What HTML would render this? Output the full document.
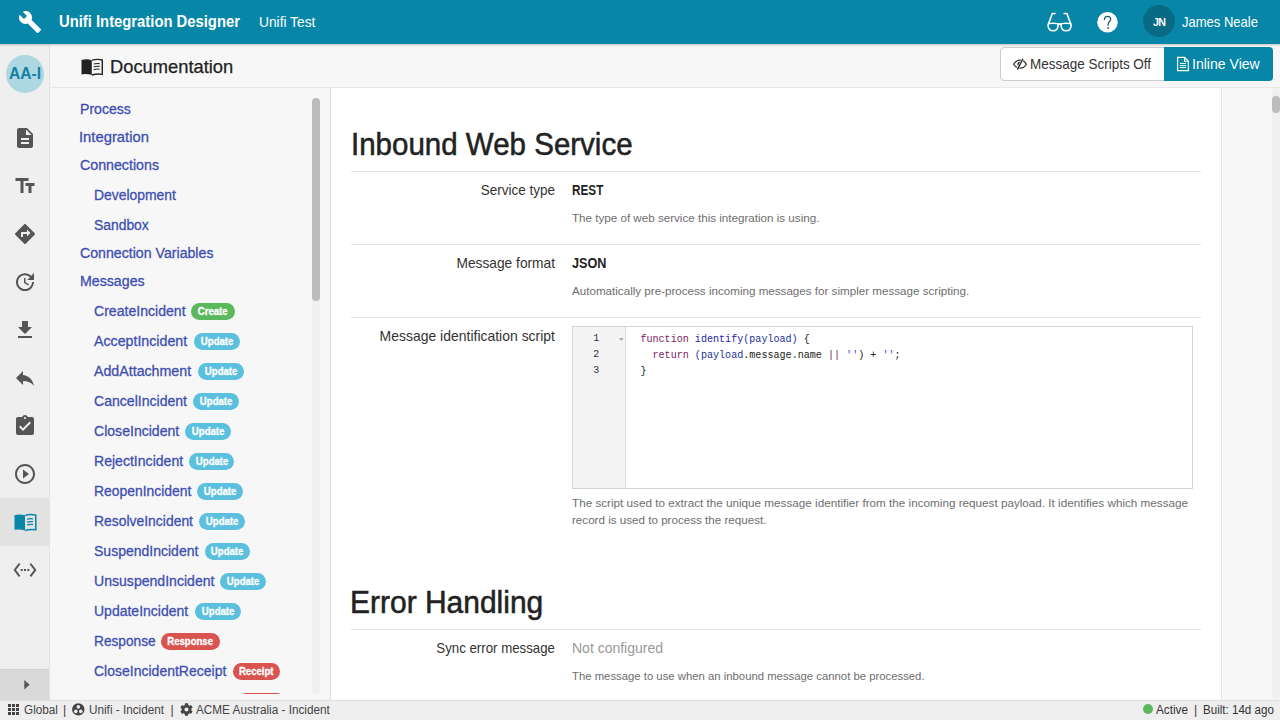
<!DOCTYPE html>
<html><head><meta charset="utf-8">
<style>
*{box-sizing:border-box;margin:0;padding:0}
html,body{width:1280px;height:720px;overflow:hidden;background:#f7f7f7;font-family:"Liberation Sans",sans-serif;position:relative}
.a{position:absolute;white-space:nowrap}
.r{position:absolute}
svg{position:absolute;overflow:visible}
</style></head><body>
<div class="r" style="left:0;top:0;width:1280px;height:44px;background:#0786a7;box-shadow:0 1px 2px rgba(0,0,0,.22);z-index:3"></div>
<div class="r" style="left:0;top:44px;width:49px;height:656px;background:#efefef"></div>
<div class="r" style="left:49px;top:44px;width:1px;height:656px;background:#e3e3e3"></div>
<div class="r" style="left:50px;top:87px;width:1230px;height:1px;background:#e8e8e8"></div>
<div class="r" style="left:330px;top:88px;width:1px;height:612px;background:#dedede"></div>
<div class="r" style="left:331px;top:88px;width:890px;height:612px;background:#fff"></div>
<div class="r" style="left:1221px;top:88px;width:1px;height:612px;background:#e6e6e6"></div>
<div class="r" style="left:312px;top:98px;width:8px;height:596px;background:#f0f0f0;border-radius:4px"></div>
<div class="r" style="left:312px;top:98px;width:8px;height:203px;background:#bcbcbc;border-radius:4px"></div>
<div class="r" style="left:1272px;top:88px;width:8px;height:611px;background:#f0f0f0;border-radius:4px"></div>
<div class="r" style="left:1272px;top:96px;width:8px;height:17px;background:#bcbcbc;border-radius:4px"></div>
<div class="r" style="left:0;top:498px;width:49px;height:48px;background:#e2e2e2"></div>
<div class="r" style="left:0;top:669px;width:49px;height:31px;background:#d9d9d9;border-top:1px solid #cfcfcf"></div>
<div class="r" style="left:0;top:700px;width:1280px;height:20px;background:#eeeeee;border-top:1px solid #e0e0e0"></div>
<div class="r" style="left:0;top:0;width:1280px;height:44px;z-index:4">
<svg style="left:18px;top:10px" width="24" height="24" viewBox="0 0 24 24"><path fill="#fff" d="M22.7 19l-9.1-9.1c.9-2.3.4-5-1.5-6.9-2-2-5-2.4-7.4-1.3L9 6 6 9 1.6 4.7C.4 7.1.9 10.1 2.9 12.1c1.9 1.9 4.6 2.4 6.9 1.5l9.1 9.1c.4.4 1 .4 1.4 0l2.3-2.3c.5-.4.5-1.1.1-1.4z"/></svg>
<div class="a" style="left:59.0px;transform-origin:0 0;top:10.57px;font-size:17.1px;line-height:21px;font-weight:700;color:#fff;transform:scaleX(0.8660);">Unifi Integration Designer</div>
<div class="a" style="left:258.5px;transform-origin:0 0;top:12.87px;font-size:14.8px;line-height:18px;font-weight:400;color:#fff;transform:scaleX(0.9300);">Unifi Test</div>
<svg style="left:1042px;top:8px" width="36" height="28" viewBox="0 0 36 28"><g fill="none" stroke="#fff" stroke-width="1.6" stroke-linecap="round" stroke-linejoin="round"><path d="M6.1 16.3 C6.3 15 15.9 14.9 16.1 16.3 C16.5 20.6 14.3 22.8 11.1 22.8 C7.9 22.8 5.7 20.6 6.1 16.3Z"/><path d="M19.1 16.3 C19.3 14.9 28.9 15 29.1 16.3 C29.5 20.6 27.3 22.8 24.1 22.8 C20.9 22.8 18.7 20.6 19.1 16.3Z"/><path d="M16.1 16.6 Q17.6 15.2 19.1 16.6"/><path d="M6.6 15.6 L10.3 5.5 H13.1"/><path d="M28.6 15.6 L24.9 5.5 H22.1"/></g></svg>
<svg style="left:1097px;top:11.8px" width="21" height="21" viewBox="0 0 21 21"><circle cx="10.5" cy="10.25" r="10.25" fill="#fff"/><path d="M7.4 7.6 C7.4 5.4 8.9 4.3 10.6 4.3 C12.4 4.3 13.7 5.5 13.7 7.2 C13.7 9.4 11.1 9.7 11.1 12.4 V13.3" fill="none" stroke="#1e5a6c" stroke-width="1.25" stroke-linecap="round"/><circle cx="11.1" cy="16" r="0.9" fill="#1e5a6c"/></svg>
<div class="r" style="left:1143px;top:5px;width:32px;height:32px;border-radius:16px;background:#086a84"></div>
<div class="a" style="left:1152.8px;transform-origin:0 0;top:14.78px;font-size:11.6px;line-height:14px;font-weight:700;color:#fff;transform:scaleX(0.9200);letter-spacing:-0.8px;">JN</div>
<div class="a" style="left:1182px;transform-origin:0 0;top:12.87px;font-size:14.8px;line-height:18px;font-weight:400;color:#fff;transform:scaleX(0.8800);">James Neale</div>
</div>
<div class="r" style="left:6px;top:55px;width:38px;height:38px;border-radius:19px;background:#acd7e3"></div>
<div class="a" style="left:9.3px;transform-origin:0 0;top:62.61px;font-size:17px;line-height:21px;font-weight:700;color:#1580a2;transform:scaleX(0.9200);">AA-I</div>
<svg style="left:81px;top:58.8px" width="22" height="16" viewBox="0 0 22 16"><path d="M0.5 1 Q5.5 -0.4 10.8 1.2 V16 Q5.5 14.4 0.5 15.4Z" fill="#222"/><path d="M11 1.2 Q16.3 -0.4 21.3 1 V15.4 Q16.3 14.4 11 16" fill="none" stroke="#222" stroke-width="1.4"/><path d="M12.7 5 Q15.5 4.2 18.6 4.6 M12.7 7.8 Q15.5 7 18.6 7.4 M12.7 10.6 Q15.5 9.8 18.6 10.2" fill="none" stroke="#222" stroke-width="1.1"/></svg>
<div class="a" style="left:109.5px;transform-origin:0 0;top:54.89px;font-size:18.5px;line-height:23px;font-weight:400;color:#222;transform:scaleX(0.9900);-webkit-text-stroke:0.25px #222;">Documentation</div>
<div class="r" style="left:1000px;top:47px;width:165px;height:34px;background:#fff;border:1px solid #cccccc;border-radius:4px 0 0 4px"></div>
<svg style="left:1012px;top:58px" width="16" height="12" viewBox="0 0 16 12"><g fill="none" stroke="#333" stroke-width="1.25"><path d="M1.6 6.3 C3.4 3.2 5.6 2.2 8 2.2 C10.4 2.2 12.6 3.2 14.4 6.3 C12.6 9.3 10.4 10.2 8 10.2 C5.6 10.2 3.4 9.3 1.6 6.3Z"/></g><path d="M8 3.6 A2.7 2.7 0 0 0 6.6 8.6 L9.2 3.8Z" fill="#333"/><path d="M11 0.8 L5.4 11.6" stroke="#fff" stroke-width="2.4"/><path d="M11 0.8 L5.4 11.6" stroke="#222" stroke-width="1.3"/></svg>
<div class="a" style="left:1029.8px;transform-origin:0 0;top:55.08px;font-size:14.2px;line-height:18px;font-weight:400;color:#333;transform:scaleX(0.9500);">Message Scripts Off</div>
<div class="r" style="left:1164px;top:47px;width:109px;height:34px;background:#0786a7;border-radius:0 4px 4px 0"></div>
<svg style="left:1176px;top:56px" width="14" height="16" viewBox="0 0 14 16"><path d="M1.6 1.4 H8.6 L12.4 5.2 V14.6 H1.6Z" fill="none" stroke="#fff" stroke-width="1.25"/><path d="M8.6 1.4 V5.2 H12.4" fill="none" stroke="#fff" stroke-width="1.1"/><path d="M3.9 7.4 H10.1 M3.9 9.6 H10.1 M3.9 11.6 H10.1" stroke="#fff" stroke-width="1"/></svg>
<div class="a" style="left:1191.8px;transform-origin:0 0;top:54.98px;font-size:14.5px;line-height:18px;font-weight:400;color:#fff;transform:scaleX(0.9700);">Inline View</div>
<div class="r" style="left:50px;top:88px;width:262px;height:606px;overflow:hidden">
<div class="a" style="left:30px;transform-origin:0 0;top:11.91px;font-size:14.7px;line-height:18px;font-weight:400;color:#3e4fb0;transform:scaleX(0.9595);-webkit-text-stroke:0.3px #3e4fb0;">Process</div>
<div class="a" style="left:29.1px;transform-origin:0 0;top:39.91px;font-size:14.7px;line-height:18px;font-weight:400;color:#3e4fb0;transform:scaleX(1.0064);-webkit-text-stroke:0.3px #3e4fb0;">Integration</div>
<div class="a" style="left:30px;transform-origin:0 0;top:67.91px;font-size:14.7px;line-height:18px;font-weight:400;color:#3e4fb0;transform:scaleX(0.9673);-webkit-text-stroke:0.3px #3e4fb0;">Connections</div>
<div class="a" style="left:44.3px;transform-origin:0 0;top:97.91px;font-size:14.7px;line-height:18px;font-weight:400;color:#3e4fb0;transform:scaleX(0.9465);-webkit-text-stroke:0.3px #3e4fb0;">Development</div>
<div class="a" style="left:44.3px;transform-origin:0 0;top:127.91px;font-size:14.7px;line-height:18px;font-weight:400;color:#3e4fb0;transform:scaleX(0.9447);-webkit-text-stroke:0.3px #3e4fb0;">Sandbox</div>
<div class="a" style="left:30px;transform-origin:0 0;top:155.91px;font-size:14.7px;line-height:18px;font-weight:400;color:#3e4fb0;transform:scaleX(0.9634);-webkit-text-stroke:0.3px #3e4fb0;">Connection Variables</div>
<div class="a" style="left:30px;transform-origin:0 0;top:183.91px;font-size:14.7px;line-height:18px;font-weight:400;color:#3e4fb0;transform:scaleX(0.9651);-webkit-text-stroke:0.3px #3e4fb0;">Messages</div>
<div class="a" style="left:44.3px;transform-origin:0 0;top:213.51px;font-size:14.7px;line-height:18px;font-weight:400;color:#3e4fb0;transform:scaleX(0.9590);-webkit-text-stroke:0.3px #3e4fb0;">CreateIncident</div>
<div class="r" style="left:141.00px;top:215.00px;width:44.00px;height:17px;border-radius:8.5px;background:#5cb85c"></div>
<div class="a" style="left:141.00px;width:44.00px;top:216.80px;font-size:10.1px;line-height:13px;font-weight:700;color:#fff;text-align:center;-webkit-text-stroke:0.3px #fff"><span style="display:inline-block;transform:scaleX(0.95)">Create</span></div>
<div class="a" style="left:44.0px;transform-origin:0 0;top:243.51px;font-size:14.7px;line-height:18px;font-weight:400;color:#3e4fb0;transform:scaleX(0.9665);-webkit-text-stroke:0.3px #3e4fb0;">AcceptIncident</div>
<div class="r" style="left:143.75px;top:245.00px;width:46.25px;height:17px;border-radius:8.5px;background:#5bc0de"></div>
<div class="a" style="left:143.75px;width:46.25px;top:246.80px;font-size:10.1px;line-height:13px;font-weight:700;color:#fff;text-align:center;-webkit-text-stroke:0.3px #fff"><span style="display:inline-block;transform:scaleX(0.95)">Update</span></div>
<div class="a" style="left:44.3px;transform-origin:0 0;top:273.51px;font-size:14.7px;line-height:18px;font-weight:400;color:#3e4fb0;transform:scaleX(0.9668);-webkit-text-stroke:0.3px #3e4fb0;">AddAttachment</div>
<div class="r" style="left:148.00px;top:275.00px;width:45.75px;height:17px;border-radius:8.5px;background:#5bc0de"></div>
<div class="a" style="left:148.00px;width:45.75px;top:276.80px;font-size:10.1px;line-height:13px;font-weight:700;color:#fff;text-align:center;-webkit-text-stroke:0.3px #fff"><span style="display:inline-block;transform:scaleX(0.95)">Update</span></div>
<div class="a" style="left:44.3px;transform-origin:0 0;top:303.51px;font-size:14.7px;line-height:18px;font-weight:400;color:#3e4fb0;transform:scaleX(0.9572);-webkit-text-stroke:0.3px #3e4fb0;">CancelIncident</div>
<div class="r" style="left:143.00px;top:305.00px;width:46.00px;height:17px;border-radius:8.5px;background:#5bc0de"></div>
<div class="a" style="left:143.00px;width:46.00px;top:306.80px;font-size:10.1px;line-height:13px;font-weight:700;color:#fff;text-align:center;-webkit-text-stroke:0.3px #fff"><span style="display:inline-block;transform:scaleX(0.95)">Update</span></div>
<div class="a" style="left:44.3px;transform-origin:0 0;top:333.51px;font-size:14.7px;line-height:18px;font-weight:400;color:#3e4fb0;transform:scaleX(0.9579);-webkit-text-stroke:0.3px #3e4fb0;">CloseIncident</div>
<div class="r" style="left:135.00px;top:335.00px;width:45.60px;height:17px;border-radius:8.5px;background:#5bc0de"></div>
<div class="a" style="left:135.00px;width:45.60px;top:336.80px;font-size:10.1px;line-height:13px;font-weight:700;color:#fff;text-align:center;-webkit-text-stroke:0.3px #fff"><span style="display:inline-block;transform:scaleX(0.95)">Update</span></div>
<div class="a" style="left:44.3px;transform-origin:0 0;top:363.51px;font-size:14.7px;line-height:18px;font-weight:400;color:#3e4fb0;transform:scaleX(0.9576);-webkit-text-stroke:0.3px #3e4fb0;">RejectIncident</div>
<div class="r" style="left:139.00px;top:365.00px;width:45.40px;height:17px;border-radius:8.5px;background:#5bc0de"></div>
<div class="a" style="left:139.00px;width:45.40px;top:366.80px;font-size:10.1px;line-height:13px;font-weight:700;color:#fff;text-align:center;-webkit-text-stroke:0.3px #fff"><span style="display:inline-block;transform:scaleX(0.95)">Update</span></div>
<div class="a" style="left:44.3px;transform-origin:0 0;top:393.51px;font-size:14.7px;line-height:18px;font-weight:400;color:#3e4fb0;transform:scaleX(0.9461);-webkit-text-stroke:0.3px #3e4fb0;">ReopenIncident</div>
<div class="r" style="left:146.90px;top:395.00px;width:45.90px;height:17px;border-radius:8.5px;background:#5bc0de"></div>
<div class="a" style="left:146.90px;width:45.90px;top:396.80px;font-size:10.1px;line-height:13px;font-weight:700;color:#fff;text-align:center;-webkit-text-stroke:0.3px #fff"><span style="display:inline-block;transform:scaleX(0.95)">Update</span></div>
<div class="a" style="left:44.3px;transform-origin:0 0;top:423.51px;font-size:14.7px;line-height:18px;font-weight:400;color:#3e4fb0;transform:scaleX(0.9471);-webkit-text-stroke:0.3px #3e4fb0;">ResolveIncident</div>
<div class="r" style="left:149.00px;top:425.00px;width:45.70px;height:17px;border-radius:8.5px;background:#5bc0de"></div>
<div class="a" style="left:149.00px;width:45.70px;top:426.80px;font-size:10.1px;line-height:13px;font-weight:700;color:#fff;text-align:center;-webkit-text-stroke:0.3px #fff"><span style="display:inline-block;transform:scaleX(0.95)">Update</span></div>
<div class="a" style="left:44.3px;transform-origin:0 0;top:453.51px;font-size:14.7px;line-height:18px;font-weight:400;color:#3e4fb0;transform:scaleX(0.9537);-webkit-text-stroke:0.3px #3e4fb0;">SuspendIncident</div>
<div class="r" style="left:154.70px;top:455.00px;width:45.30px;height:17px;border-radius:8.5px;background:#5bc0de"></div>
<div class="a" style="left:154.70px;width:45.30px;top:456.80px;font-size:10.1px;line-height:13px;font-weight:700;color:#fff;text-align:center;-webkit-text-stroke:0.3px #fff"><span style="display:inline-block;transform:scaleX(0.95)">Update</span></div>
<div class="a" style="left:44.3px;transform-origin:0 0;top:483.51px;font-size:14.7px;line-height:18px;font-weight:400;color:#3e4fb0;transform:scaleX(0.9580);-webkit-text-stroke:0.3px #3e4fb0;">UnsuspendIncident</div>
<div class="r" style="left:170.30px;top:485.00px;width:45.30px;height:17px;border-radius:8.5px;background:#5bc0de"></div>
<div class="a" style="left:170.30px;width:45.30px;top:486.80px;font-size:10.1px;line-height:13px;font-weight:700;color:#fff;text-align:center;-webkit-text-stroke:0.3px #fff"><span style="display:inline-block;transform:scaleX(0.95)">Update</span></div>
<div class="a" style="left:44.3px;transform-origin:0 0;top:513.51px;font-size:14.7px;line-height:18px;font-weight:400;color:#3e4fb0;transform:scaleX(0.9535);-webkit-text-stroke:0.3px #3e4fb0;">UpdateIncident</div>
<div class="r" style="left:145.00px;top:515.00px;width:45.80px;height:17px;border-radius:8.5px;background:#5bc0de"></div>
<div class="a" style="left:145.00px;width:45.80px;top:516.80px;font-size:10.1px;line-height:13px;font-weight:700;color:#fff;text-align:center;-webkit-text-stroke:0.3px #fff"><span style="display:inline-block;transform:scaleX(0.95)">Update</span></div>
<div class="a" style="left:44.3px;transform-origin:0 0;top:543.51px;font-size:14.7px;line-height:18px;font-weight:400;color:#3e4fb0;transform:scaleX(0.9331);-webkit-text-stroke:0.3px #3e4fb0;">Response</div>
<div class="r" style="left:111.00px;top:545.00px;width:58.70px;height:17px;border-radius:8.5px;background:#d9534f"></div>
<div class="a" style="left:111.00px;width:58.70px;top:546.80px;font-size:10.1px;line-height:13px;font-weight:700;color:#fff;text-align:center;-webkit-text-stroke:0.3px #fff"><span style="display:inline-block;transform:scaleX(0.95)">Response</span></div>
<div class="a" style="left:44.3px;transform-origin:0 0;top:573.51px;font-size:14.7px;line-height:18px;font-weight:400;color:#3e4fb0;transform:scaleX(0.9536);-webkit-text-stroke:0.3px #3e4fb0;">CloseIncidentReceipt</div>
<div class="r" style="left:183.00px;top:575.00px;width:46.80px;height:17px;border-radius:8.5px;background:#d9534f"></div>
<div class="a" style="left:183.00px;width:46.80px;top:576.80px;font-size:10.1px;line-height:13px;font-weight:700;color:#fff;text-align:center;-webkit-text-stroke:0.3px #fff"><span style="display:inline-block;transform:scaleX(0.95)">Receipt</span></div>
<div class="a" style="left:44.3px;transform-origin:0 0;top:603.51px;font-size:14.7px;line-height:18px;font-weight:400;color:#3e4fb0;transform:scaleX(0.9500);-webkit-text-stroke:0.3px #3e4fb0;">ResolveIncidentReceipt</div>
<div class="r" style="left:188.00px;top:605.00px;width:47.00px;height:17px;border-radius:8.5px;background:#d9534f"></div>
<div class="a" style="left:188.00px;width:47.00px;top:606.80px;font-size:10.1px;line-height:13px;font-weight:700;color:#fff;text-align:center;-webkit-text-stroke:0.3px #fff"><span style="display:inline-block;transform:scaleX(0.95)">Receipt</span></div>
</div>
<svg style="left:13px;top:126px" width="24" height="24" viewBox="0 0 24 24"><path fill="#555" d="M14 2H6c-1.1 0-1.99.9-1.99 2L4 20c0 1.1.89 2 1.99 2H18c1.1 0 2-.9 2-2V8l-6-6zm2 16H8v-2h8v2zm0-4H8v-2h8v2zm-3-5V3.5L18.5 9H13z"/></svg>
<svg style="left:12.7px;top:173.8px" width="24" height="24" viewBox="0 0 24 24"><path fill="#555" d="M2.5 4v3h5v12h3V7h5V4h-13zm19 5h-9v3h3v7h3v-7h3V9z"/></svg>
<svg style="left:13px;top:222px" width="24" height="24" viewBox="0 0 24 24"><path fill="#555" d="M21.71 11.29l-9-9c-.39-.39-1.02-.39-1.41 0l-9 9c-.39.39-.39 1.02 0 1.41l9 9c.39.39 1.02.39 1.41 0l9-9c.39-.38.39-1.01 0-1.41zM14 14.5V12h-4v3H8v-4c0-.55.45-1 1-1h5V7.5l3.5 3.5-3.5 3.5z"/></svg>
<svg style="left:13px;top:270px" width="24" height="24" viewBox="0 0 24 24"><path fill="#555" d="M21 10.12h-6.78l2.74-2.82c-2.73-2.7-7.15-2.8-9.88-.1-2.73 2.71-2.73 7.08 0 9.79s7.15 2.71 9.88 0C18.32 15.65 19 14.08 19 12.1h2c0 1.98-.88 4.55-2.640 6.29-3.51 3.48-9.21 3.48-12.72 0-3.5-3.47-3.53-9.11-.02-12.58s9.14-3.47 12.65 0L21 3v7.12zM12.5 8v4.25l3.5 2.08-.72 1.210L11 13V8h1.5z"/></svg>
<svg style="left:13.1px;top:317.9px" width="24" height="24" viewBox="0 0 24 24"><path fill="#555" d="M19 9h-4V3H9v6H5l7 7 7-7zM5 18v2h14v-2H5z"/></svg>
<svg style="left:13px;top:366px" width="24" height="24" viewBox="0 0 24 24"><path fill="#555" d="M10 9V5l-7 7 7 7v-4.1c5 0 8.5 1.6 11 5.1-1-5-4-10-11-11z"/></svg>
<svg style="left:13px;top:414px" width="24" height="24" viewBox="0 0 24 24"><path fill="#555" d="M19 3h-4.18C14.4 1.84 13.3 1 12 1c-1.3 0-2.4.84-2.82 2H5c-1.1 0-2 .9-2 2v14c0 1.1.9 2 2 2h14c1.1 0 2-.9 2-2V5c0-1.1-.9-2-2-2zm-7 0c.55 0 1 .45 1 1s-.45 1-1 1-1-.45-1-1 .45-1 1-1zm-2 14l-4-4 1.41-1.41L10 14.17l6.590-6.59L18 9l-8 8z"/></svg>
<svg style="left:13.2px;top:462.1px" width="24" height="24" viewBox="0 0 24 24"><path fill="#555" d="M10 16.5l6-4.5-6-4.5v9zM12 2C6.48 2 2 6.48 2 12s4.48 10 10 10 10-4.48 10-10S17.52 2 12 2zm0 18c-4.41 0-8-3.590-8-8s3.59-8 8-8 8 3.59 8 8-3.59 8-8 8z"/></svg>
<svg style="left:14px;top:514.4px" width="22.5" height="16.6" viewBox="0 0 22 16"><path d="M0.5 1 Q5.5 -0.4 10.8 1.2 V16 Q5.5 14.4 0.5 15.4Z" fill="#0786a7"/><path d="M11 1.2 Q16.3 -0.4 21.3 1 V15.4 Q16.3 14.4 11 16" fill="none" stroke="#0786a7" stroke-width="1.5"/><path d="M12.7 5 Q15.5 4.2 18.6 4.6 M12.7 7.8 Q15.5 7 18.6 7.4 M12.7 10.6 Q15.5 9.8 18.6 10.2" fill="none" stroke="#0786a7" stroke-width="1.2"/></svg>
<svg style="left:13px;top:562px" width="24" height="16" viewBox="0 0 24 16"><g fill="none" stroke="#555" stroke-width="2" stroke-linecap="square"><path d="M6 2.5 L1.8 8 L6 13.5"/><path d="M18 2.5 L22.2 8 L18 13.5"/></g><g fill="#555"><rect x="7.7" y="7" width="2" height="2"/><rect x="11" y="7" width="2" height="2"/><rect x="14.3" y="7" width="2" height="2"/></g></svg>
<svg style="left:23.5px;top:679.5px" width="6" height="10" viewBox="0 0 6 10"><path d="M0.3 0 L5.6 4.8 L0.3 9.6Z" fill="#555"/></svg>
<div class="a" style="left:351.3px;transform-origin:0 0;top:123.78px;font-size:31.8px;line-height:40px;font-weight:400;color:#222;transform:scaleX(0.9280);-webkit-text-stroke:0.55px #222;">Inbound Web Service</div>
<div class="r" style="left:351px;top:171px;width:850px;height:1px;background:#e2e2e2"></div>
<div class="a" style="left:-1445.0px;width:2000px;text-align:right;transform-origin:100% 0;top:180.98px;font-size:14.5px;line-height:18px;font-weight:400;color:#333;transform:scaleX(0.9300);">Service type</div>
<div class="a" style="left:572.3px;transform-origin:0 0;top:180.98px;font-size:14.5px;line-height:18px;font-weight:700;color:#222;transform:scaleX(0.8100);">REST</div>
<div class="a" style="left:572.3px;transform-origin:0 0;top:211.11px;font-size:11.8px;line-height:15px;font-weight:400;color:#6e6e6e;transform:scaleX(0.9850);">The type of web service this integration is using.</div>
<div class="r" style="left:351px;top:244px;width:850px;height:1px;background:#e2e2e2"></div>
<div class="a" style="left:-1445.0px;width:2000px;text-align:right;transform-origin:100% 0;top:254.18px;font-size:14.5px;line-height:18px;font-weight:400;color:#333;transform:scaleX(0.9470);">Message format</div>
<div class="a" style="left:572.3px;transform-origin:0 0;top:254.18px;font-size:14.5px;line-height:18px;font-weight:700;color:#222;transform:scaleX(0.8700);">JSON</div>
<div class="a" style="left:572.3px;transform-origin:0 0;top:284.11px;font-size:11.8px;line-height:15px;font-weight:400;color:#6e6e6e;transform:scaleX(0.9850);">Automatically pre-process incoming messages for simpler message scripting.</div>
<div class="r" style="left:351px;top:317px;width:850px;height:1px;background:#e2e2e2"></div>
<div class="a" style="left:-1445.0px;width:2000px;text-align:right;transform-origin:100% 0;top:327.28px;font-size:14.5px;line-height:18px;font-weight:400;color:#333;transform:scaleX(0.9630);">Message identification script</div>
<div class="r" style="left:572px;top:326px;width:621px;height:163px;background:#fff;border:1px solid #d4d4d4"></div>
<div class="r" style="left:573px;top:327px;width:53px;height:161px;background:#f4f4f4;border-right:1px solid #dcdcdc"></div>
<div class="a" style="left:593.3px;transform-origin:0 0;top:333.34px;font-size:10px;line-height:12px;font-weight:400;color:#333;font-family:'Liberation Mono',monospace;">1</div>
<div class="a" style="left:593.3px;transform-origin:0 0;top:349.34px;font-size:10px;line-height:12px;font-weight:400;color:#333;font-family:'Liberation Mono',monospace;">2</div>
<div class="a" style="left:593.3px;transform-origin:0 0;top:365.34px;font-size:10px;line-height:12px;font-weight:400;color:#333;font-family:'Liberation Mono',monospace;">3</div>
<svg style="left:618.5px;top:338px" width="5" height="3" viewBox="0 0 5 3"><path d="M0 0 H4.6 L2.3 3Z" fill="#aaa"/></svg>
<div class="a" style="left:640.4px;transform-origin:0 0;top:332.81px;font-size:10.08px;line-height:13px;font-weight:400;color:#222;font-family:'Liberation Mono',monospace;white-space:pre;"><span style="color:#7a1a5e">function</span> <span style="color:#1d1dae">identify</span><span style="color:#22329a">(payload)</span> <span style="color:#222">{</span></div>
<div class="a" style="left:640.4px;transform-origin:0 0;top:348.81px;font-size:10.08px;line-height:13px;font-weight:400;color:#222;font-family:'Liberation Mono',monospace;white-space:pre;">  <span style="color:#7a1a5e">return</span> <span style="color:#22329a">(payload</span>.message.name <span style="color:#7a1a5e">||</span> <span style="color:#4646d8">''</span>) + <span style="color:#4646d8">''</span>;</div>
<div class="a" style="left:640.4px;transform-origin:0 0;top:364.81px;font-size:10.08px;line-height:13px;font-weight:400;color:#222;font-family:'Liberation Mono',monospace;white-space:pre;">}</div>
<div class="a" style="left:572.3px;transform-origin:0 0;top:496.11px;font-size:11.8px;line-height:15px;font-weight:400;color:#6e6e6e;transform:scaleX(0.9910);">The script used to extract the unique message identifier from the incoming request payload. It identifies which message</div>
<div class="a" style="left:572.3px;transform-origin:0 0;top:513.11px;font-size:11.8px;line-height:15px;font-weight:400;color:#6e6e6e;transform:scaleX(0.9850);">record is used to process the request.</div>
<div class="a" style="left:350.2px;transform-origin:0 0;top:582.62px;font-size:31.4px;line-height:39px;font-weight:400;color:#222;transform:scaleX(0.9550);-webkit-text-stroke:0.55px #222;">Error Handling</div>
<div class="r" style="left:351px;top:629px;width:850px;height:1px;background:#e2e2e2"></div>
<div class="a" style="left:-1445.0px;width:2000px;text-align:right;transform-origin:100% 0;top:638.58px;font-size:14.5px;line-height:18px;font-weight:400;color:#333;transform:scaleX(0.9150);">Sync error message</div>
<div class="a" style="left:571.6px;transform-origin:0 0;top:638.58px;font-size:14.5px;line-height:18px;font-weight:400;color:#999;transform:scaleX(0.9650);">Not configured</div>
<div class="a" style="left:572.3px;transform-origin:0 0;top:668.91px;font-size:11.8px;line-height:15px;font-weight:400;color:#6e6e6e;transform:scaleX(0.9600);">The message to use when an inbound message cannot be processed.</div>
<svg style="left:8px;top:704px" width="11" height="11" viewBox="0 0 11 11"><g fill="#444"><rect x="0" y="0" width="3" height="3"/><rect x="4" y="0" width="3" height="3"/><rect x="8" y="0" width="3" height="3"/><rect x="0" y="4" width="3" height="3"/><rect x="4" y="4" width="3" height="3"/><rect x="8" y="4" width="3" height="3"/><rect x="0" y="8" width="3" height="3"/><rect x="4" y="8" width="3" height="3"/><rect x="8" y="8" width="3" height="3"/></g></svg>
<div class="a" style="left:23.6px;transform-origin:0 0;top:702.84px;font-size:12.3px;line-height:15px;font-weight:400;color:#444;transform:scaleX(0.9550);">Global</div>
<div class="a" style="left:63px;transform-origin:0 0;top:702.84px;font-size:12.3px;line-height:15px;font-weight:400;color:#444;">|</div>
<svg style="left:72px;top:703px" width="13" height="13" viewBox="0 0 13 13"><circle cx="6.3" cy="6.4" r="6.2" fill="#444"/><circle cx="6.3" cy="3.9" r="1.8" fill="#eee"/><circle cx="3.8" cy="8.4" r="1.8" fill="#eee"/><circle cx="8.8" cy="8.4" r="1.8" fill="#eee"/></svg>
<div class="a" style="left:88.6px;transform-origin:0 0;top:702.84px;font-size:12.3px;line-height:15px;font-weight:400;color:#444;transform:scaleX(0.9550);">Unifi - Incident</div>
<div class="a" style="left:170.5px;transform-origin:0 0;top:702.84px;font-size:12.3px;line-height:15px;font-weight:400;color:#444;">|</div>
<svg style="left:179.5px;top:703px" width="13" height="13" viewBox="0 0 512 512"><path fill="#444" d="M487.4 315.7l-42.6-24.6c4.3-23.2 4.3-47 0-70.2l42.6-24.6c4.9-2.8 7.1-8.6 5.5-14-11.1-35.6-30-67.8-54.7-94.6-3.800-4.100-10-5.100-14.8-2.300L380.8 110c-17.9-15.4-38.5-27.3-60.8-35.1V25.8c0-5.6-3.9-10.5-9.4-11.7-36.7-8.2-74.3-7.8-109.2 0-5.500 1.200-9.400 6.100-9.400 11.700V75c-22.2 7.9-42.8 19.8-60.8 35.1L88.7 85.5c-4.900-2.800-11-1.900-14.8 2.300-24.7 26.700-43.6 58.900-54.700 94.600-1.700 5.400.600 11.200 5.500 14L67.300 221c-4.300 23.200-4.300 47 0 70.200l-42.600 24.600c-4.900 2.800-7.100 8.600-5.500 14 11.100 35.600 30 67.800 54.700 94.600 3.800 4.100 10 5.100 14.800 2.300l42.600-24.600c17.900 15.400 38.500 27.300 60.800 35.100v49.200c0 5.600 3.900 10.500 9.400 11.700 36.700 8.200 74.300 7.800 109.200 0 5.500-1.200 9.400-6.100 9.400-11.700v-49.200c22.200-7.900 42.800-19.800 60.800-35.100l42.600 24.600c4.900 2.800 11 1.900 14.800-2.300 24.700-26.700 43.600-58.900 54.700-94.600 1.500-5.500-.700-11.300-5.600-14.100zM256 336c-44.100 0-80-35.900-80-80s35.900-80 80-80 80 35.900 80 80-35.900 80-80 80z"/></svg>
<div class="a" style="left:196.3px;transform-origin:0 0;top:702.84px;font-size:12.3px;line-height:15px;font-weight:400;color:#444;transform:scaleX(0.9550);">ACME Australia - Incident</div>
<div class="r" style="left:1143px;top:704px;width:10px;height:10px;border-radius:5px;background:#5cb85c"></div>
<div class="a" style="left:1156px;transform-origin:0 0;top:702.84px;font-size:12.3px;line-height:15px;font-weight:400;color:#333;transform:scaleX(0.9550);">Active</div>
<div class="a" style="left:1194px;transform-origin:0 0;top:702.84px;font-size:12.3px;line-height:15px;font-weight:400;color:#444;">|</div>
<div class="a" style="left:1202.5px;transform-origin:0 0;top:702.84px;font-size:12.3px;line-height:15px;font-weight:400;color:#333;transform:scaleX(0.9420);">Built: 14d ago</div>
</body></html>
